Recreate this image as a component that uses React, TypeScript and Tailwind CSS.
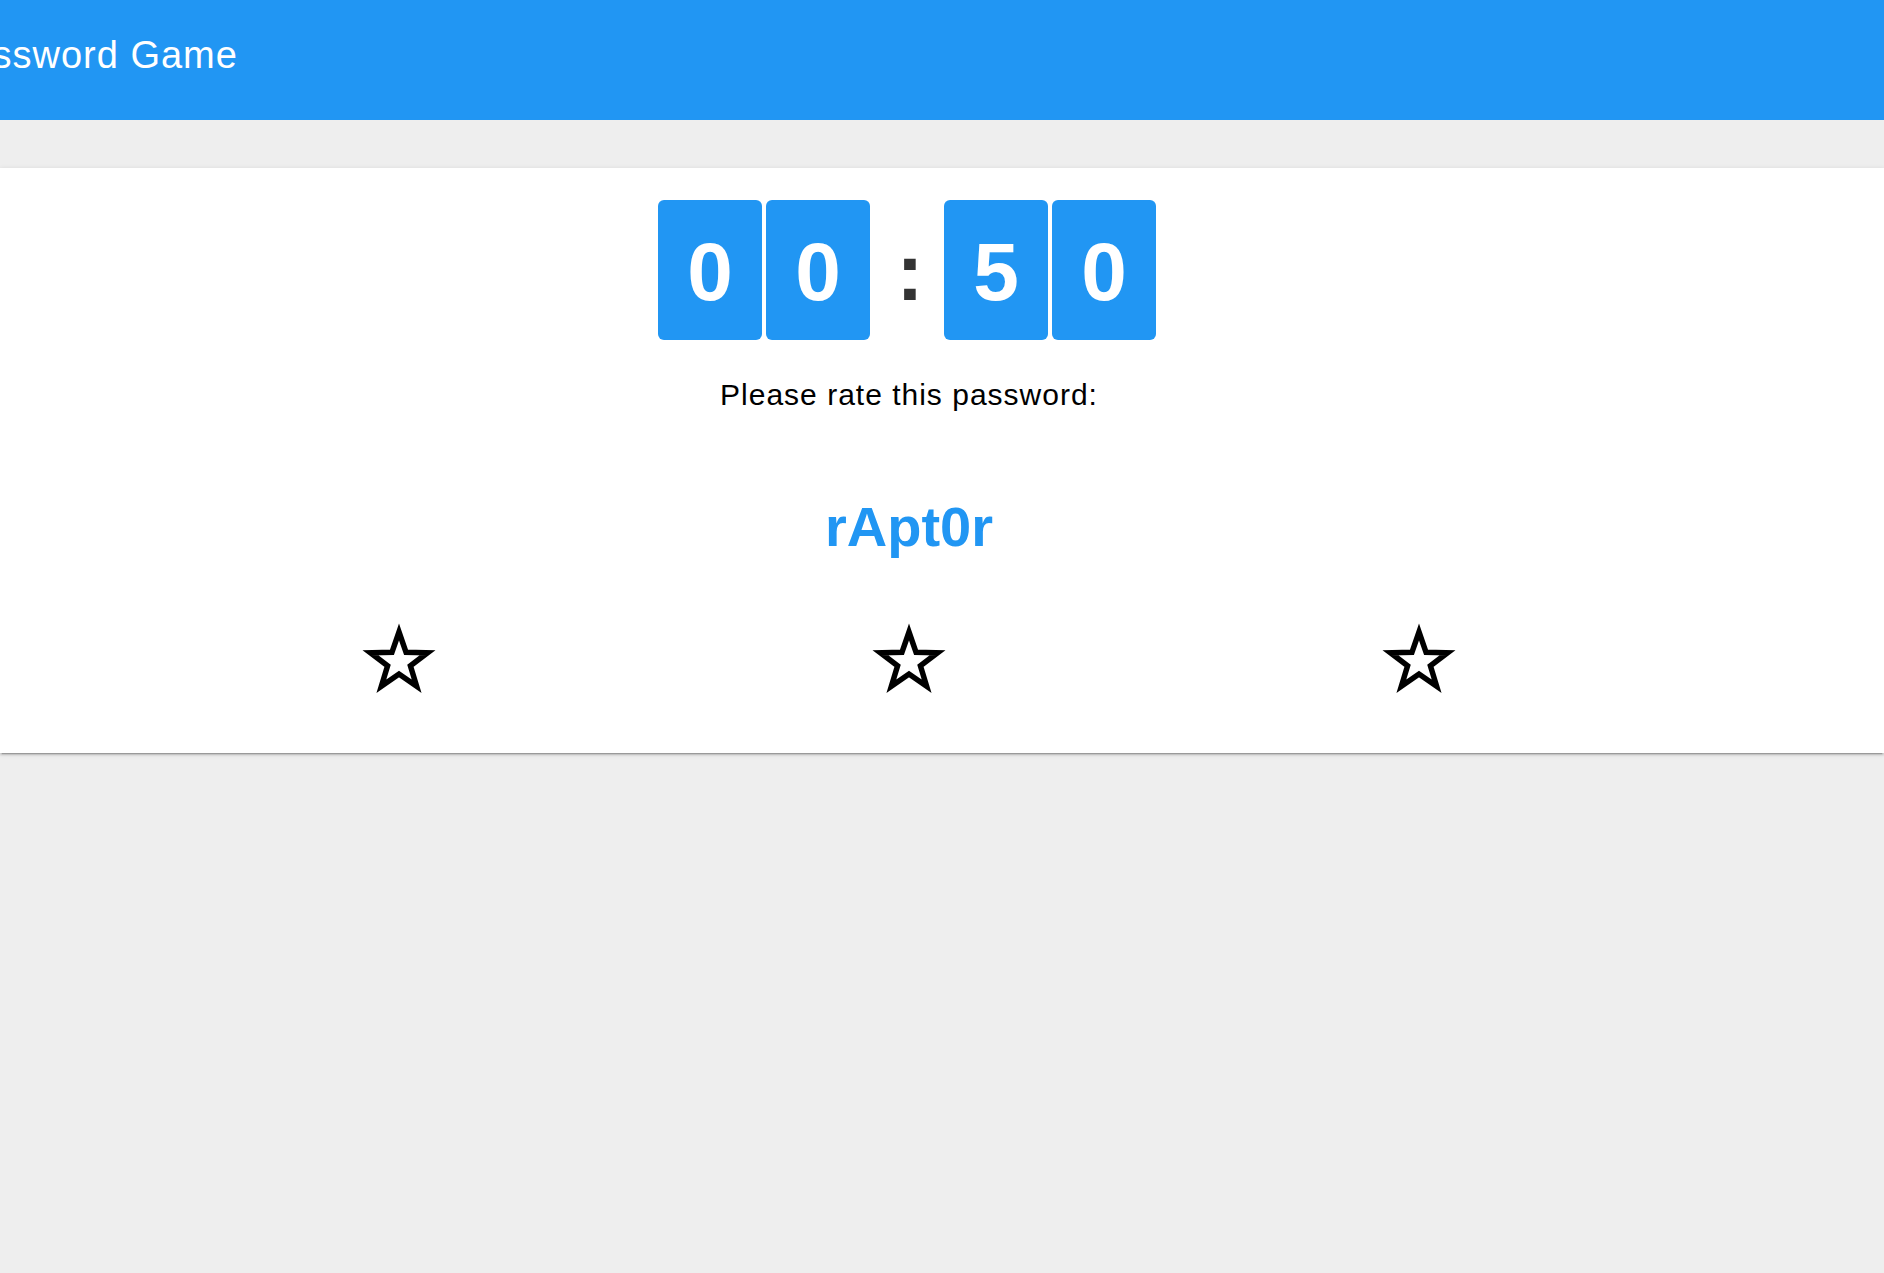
import React from "react";

function Star() {
  return (
    <svg width="80" height="76" viewBox="0 0 80 76" className="block">
      <polygon
        points="40,10 47.05,30.29 68.53,30.73 51.41,43.71 57.63,64.27 40,52 22.37,64.27 28.59,43.71 11.47,30.73 32.95,30.29"
        fill="none"
        stroke="#000"
        strokeWidth="5.5"
        strokeLinejoin="miter"
      />
    </svg>
  );
}

function Digit({ d }: { d: string }) {
  return (
    <div className="w-[104px] h-[140px] rounded-[6px] bg-[#2196F3] flex items-center justify-center pt-[3px]">
      <span className="text-white font-bold text-[82px] leading-none">{d}</span>
    </div>
  );
}

export default function App() {
  return (
    <div
      className="min-h-[1273px] w-full overflow-hidden bg-[#eeeeee]"
      style={{ fontFamily: '"Liberation Sans", Arial, Helvetica, sans-serif' }}
    >
      <header className="h-[120px] bg-[#2196F3]">
        <h1 className="ml-[-56px] pt-[33px] text-[38px] leading-[44px] tracking-[1px] text-white font-normal whitespace-nowrap">
          Password Game
        </h1>
      </header>
      <main className="mt-[48px] bg-white shadow-[0_2px_2px_0_rgba(0,0,0,0.14),0_3px_1px_-2px_rgba(0,0,0,0.2),0_1px_5px_0_rgba(0,0,0,0.12)]">
        <div className="w-[1818px] flex flex-col items-center pt-[32px] pb-[55px]">
          <div className="flex items-center mr-[4px]">
            <div className="flex gap-[4px]">
              <Digit d="0" />
              <Digit d="0" />
            </div>
            <div className="w-[74px] h-[140px] flex items-center justify-center pt-[3px] pl-[6px]">
              <span className="text-[#333333] font-bold text-[82px] leading-none">:</span>
            </div>
            <div className="flex gap-[4px]">
              <Digit d="5" />
              <Digit d="0" />
            </div>
          </div>
          <p className="mt-[38px] text-[30px] leading-[34px] tracking-[1px] text-black">
            Please rate this password:
          </p>
          <div className="mt-[83px] text-[56px] leading-[64px] font-bold text-[#2196F3]">rApt0r</div>
          <div className="mt-[63px] grid grid-cols-3 w-[1530px]">
            <div className="flex justify-center">
              <Star />
            </div>
            <div className="flex justify-center">
              <Star />
            </div>
            <div className="flex justify-center">
              <Star />
            </div>
          </div>
        </div>
      </main>
    </div>
  );
}
